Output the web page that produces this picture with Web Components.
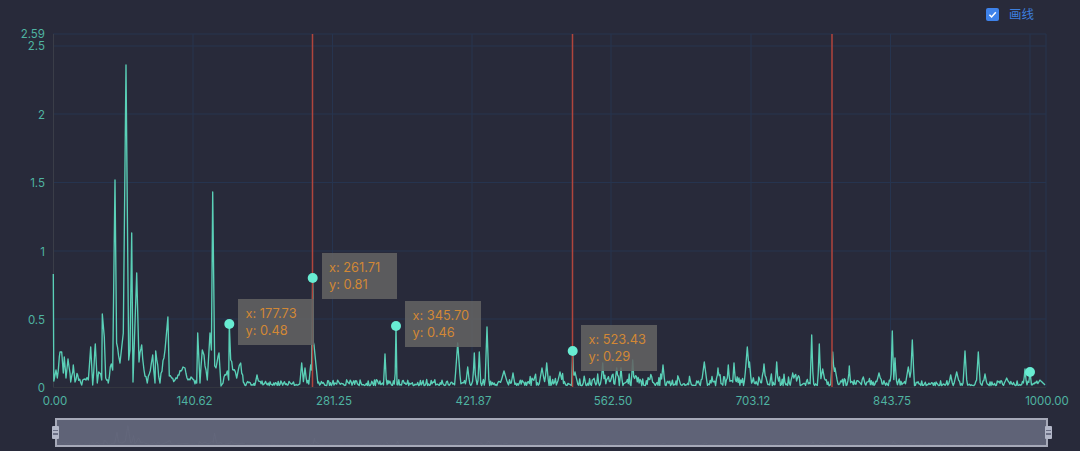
<!DOCTYPE html>
<html lang="zh">
<head>
<meta charset="utf-8">
<title>画线</title>
<style>
  html, body { margin: 0; background: #282a3a; }
  body { width: 1080px; height: 451px; overflow: hidden; font-family: Inter, "Noto Sans CJK SC", sans-serif; }
</style>
</head>
<body>
<chart-panel></chart-panel>
<script>
// hand read points for the busy left part, page pixels
const HEAD = [[53.3,274],[53.8,381],[56,370],[57.3,378],[60,352],[61.7,352],[63.3,373],[64.3,357],[66,378],[68,359],[70.7,382],[73.3,365],[75,382],[77.7,375],[81.7,385],[85,379],[88.3,380],[90.7,347],[92.7,385],[95.3,344],[97.3,383],[98.7,372],[101.7,380],[102.3,314],[104.3,337],[105.7,378],[108.3,383],[111.3,364],[112.7,370],[115,180],[116.6,343],[120,363],[123.3,333],[126,65],[128.7,360],[130,350],[131.7,233],[133,382],[136.7,273],[139,362],[141.7,345],[144,370],[147.3,383],[152.7,355],[155,383],[155.7,351],[160,383],[165,350],[167.9,317],[169.3,376],[171.7,378],[175,380],[178,375],[183,367],[185,368],[188,380],[192,378],[196.7,383],[197.7,333],[200,383],[202.3,350],[204,355],[207.3,380],[210,333],[211.4,350],[212.7,192],[214.7,366],[216,368],[219,353],[221,386],[224,377],[227.3,371],[228.7,380],[229.3,324],[230.7,360],[233.3,370],[236.7,378],[238.3,370],[240.7,363],[243.3,382]];

// [x, top y, half width]
const PEAKS = [[257,375,2],[301.7,363,2],[305,368,2],[310.7,365,2],[312.7,278,1],[314,345,4],[385,354,1.5],[396,326,1],[457.7,343,3],[467.7,367,2],[474.3,353,1.5],[479.3,352,1.5],[487,327,2],[504,371,4],[513,373,2],[542,368,3],[546.7,363,2],[560,372,3],[572.7,351,1],[575,372,3],[602.7,363,1.5],[616.7,368,2],[621,368,1.5],[632.7,360,1.5],[663,365,2],[704.3,362,3],[718,368,1.5],[728.3,365,1.5],[734,363,1.5],[747.3,347,3],[749.5,362,2],[764,364,2],[776.7,362,1.5],[792.7,373,2],[811.7,335,1.5],[819.3,344,1.5],[822.7,369,3],[832.7,352,2],[835,368,3],[849.3,366,1.2],[863.3,377,2],[879,373,3],[892.3,331,1.5],[895,358,1.5],[908.3,367,3],[912.3,340,2],[950.7,375,2],[956.7,372,3],[965,351,2],[978.3,352,2],[985,374,2],[1006.7,378,3],[1025,369,1.5],[1030,372,1.5],[1040,380,3]];

function noiseAt(i) {
  const s = Math.sin(i * 12.9898 + 4.1) * 43758.5453;
  return s - Math.floor(s);
}

function ampAt(x) {
  if (x < 300) return 5;
  if (x < 530) return 6;
  if (x < 800) return 12;
  if (x < 915) return 7;
  return 5;
}

// wiggle the long low stretches of the hand read part
function denseHead() {
  const out = [];
  HEAD.forEach((p, i) => {
    out.push(p);
    const q = HEAD[i + 1];
    if (!q || q[0] - p[0] < 2.2 || p[1] < 340 || q[1] < 340) return;
    for (let x = p[0] + 1; x < q[0] - .5; x += 1) {
      const t = (x - p[0]) / (q[0] - p[0]);
      const y = p[1] + (q[1] - p[1]) * t + (noiseAt(Math.round(x * 7)) - .5) * 7;
      out.push([x, Math.min(y, 386)]);
    }
  });
  return out;
}

function buildSeries() {
  const pts = denseHead();
  const xs = [];
  for (let x = 244; x <= 1045; x += .9) xs.push(x);
  PEAKS.forEach(p => xs.push(p[0]));
  xs.sort((a, b) => a - b);
  xs.forEach(x => {
    const n = noiseAt(Math.round(x * 3));
    let y = x > 1041 ? 381 + (x - 1041) : 385.5 - n * n * ampAt(x);
    PEAKS.forEach(([px, py, w]) => {
      const d = Math.abs(x - px);
      if (d < w) y = Math.min(y, py + (385 - py) * d / w);
    });
    pts.push([x, y]);
  });
  return pts;
}

const SERIES = buildSeries();
const toPath = (pts, fx, fy) => pts.map(p => fx(p[0]).toFixed(1) + "," + fy(p[1]).toFixed(1)).join(" ");

customElements.define("chart-legend", class extends HTMLElement {
  constructor() {
    super();
    this.attachShadow({mode: "open"});
    this.shadowRoot.innerHTML = `
    <style>
      :host { display: flex; justify-content: flex-end; align-items: center; height: 28px; padding-right: 46px; }
      .box { width: 13px; height: 13px; border-radius: 2px; background: #3e82ea; margin-right: 10px; display: flex; }
      .label { font: 12.5px/28px "Noto Sans CJK SC", sans-serif; color: #3d7fdc; }
    </style>
    <span class="box">
      <svg width="13" height="13" viewBox="0 0 13 13"><path d="M3.4 6.8 5.6 9 9.8 4.3" fill="none" stroke="#fff" stroke-width="1.5"/></svg>
    </span>
    <span class="label"><slot></slot></span>`;
  }
});

customElements.define("data-tip", class extends HTMLElement {
  constructor() {
    super();
    this.attachShadow({mode: "open"});
    this.shadowRoot.innerHTML = `
    <style>
      :host { position: absolute; box-sizing: border-box; width: 75.5px; height: 45.5px; padding: 6px 7.5px; background: rgba(99,99,99,.87);
        color: #d28835; font: 12.8px/17px Inter, sans-serif; white-space: nowrap; }
      div { display: block; }
    </style>
    <div id="x"></div><div id="y"></div>`;
  }

  connectedCallback() {
    this.style.left = this.getAttribute("left") + "px";
    this.style.top = this.getAttribute("top") + "px";
    this.shadowRoot.getElementById("x").textContent = "x: " + this.getAttribute("x");
    this.shadowRoot.getElementById("y").textContent = "y: " + this.getAttribute("y");
  }
});

customElements.define("line-chart", class extends HTMLElement {
  constructor() {
    super();
    this.attachShadow({mode: "open"});
    const hLines = [34, 46, 114, 182.5, 251, 319];
    const vLines = [193, 332.5, 472, 611, 751, 890.5, 1030, 1046];
    const yLabels = [["2.59", 38], ["2.5", 50], ["2", 118.5], ["1.5", 187], ["1", 255.5], ["0.5", 323.5], ["0", 392]];
    const xLabels = [["0.00", 55], ["140.62", 194.5], ["281.25", 334], ["421.87", 473.5], ["562.50", 613], ["703.12", 753], ["843.75", 892], ["1000.00", 1047]];
    const marks = [[229.3, 324], [312.7, 278], [396, 326], [572.7, 351], [1030, 372]];
    this.shadowRoot.innerHTML = `
    <style>
      :host { display: block; position: relative; height: 382px; }
      svg { display: block; }
      text { font: 11.5px Inter, sans-serif; fill: #4fb3a1; }
      .soft { filter: blur(.35px); }
    </style>
    <svg width="1080" height="382" viewBox="0 28 1080 382">
      ${hLines.map(y => `<line x1="53" x2="1046" y1="${y}" y2="${y}" stroke="#26344f"/>`).join("")}
      ${vLines.map(x => `<line x1="${x}" x2="${x}" y1="34" y2="387" stroke="#26344f"/>`).join("")}
      <line x1="53.5" x2="53.5" y1="34" y2="387" stroke="#3a3d48"/>
      <line x1="53" x2="1046" y1="387.5" y2="387.5" stroke="#33363f"/>
      ${yLabels.map(l => `<text x="45" y="${l[1]}" text-anchor="end">${l[0]}</text>`).join("")}
      ${xLabels.map(l => `<text x="${l[1]}" y="405" text-anchor="middle">${l[0]}</text>`).join("")}
      <polyline class="soft" points="${toPath(SERIES, x => x, y => y)}" fill="none" stroke="#5ad0b7" stroke-width="1.35" stroke-linejoin="round"/>
      ${[312.5, 572.5, 832].map(x => `<line class="soft" x1="${x}" x2="${x}" y1="34" y2="387" stroke="#b0453c" stroke-width="1.5"/>`).join("")}
      ${marks.map(m => `<circle class="soft" cx="${m[0]}" cy="${m[1]}" r="5" fill="#68ecd2"/>`).join("")}
    </svg>
    <slot></slot>`;
  }
});

customElements.define("zoom-bar", class extends HTMLElement {
  constructor() {
    super();
    this.attachShadow({mode: "open"});
    this.shadowRoot.innerHTML = `
    <style>
      :host { display: block; position: relative; box-sizing: border-box; width: 993px; height: 28.5px; margin: 8px 0 0 55px;
        background: #5f6377; border: 2px solid #a6a9b8; }
      svg { display: block; width: 100%; height: 100%; }
      .handle { position: absolute; top: 5.5px; width: 7px; height: 13px; border-radius: 1px; background: #b3b7c8; display: flex; flex-direction: column; justify-content: center; gap: 2px; align-items: center; }
      .handle i { display: block; width: 5px; height: 1.5px; background: #6c7086; }
      .l { left: -5.5px; } .r { right: -5.5px; }
    </style>
    <svg viewBox="0 0 990 25" preserveAspectRatio="none">
      <polyline points="${toPath(SERIES, x => x - 55, y => 25 - (387 - y) * .06)}" fill="none" stroke="#64687c" stroke-width=".8"/>
    </svg>
    <span class="handle l"><i></i><i></i></span>
    <span class="handle r"><i></i><i></i></span>`;
  }
});

customElements.define("chart-panel", class extends HTMLElement {
  constructor() {
    super();
    this.attachShadow({mode: "open"});
    this.shadowRoot.innerHTML = `
    <style>
      :host { display: block; width: 1080px; height: 451px; background: #282a3a; }
    </style>
    <chart-legend>画线</chart-legend>
    <line-chart>
      <data-tip left="238" top="271" x="177.73" y="0.48"></data-tip>
      <data-tip left="321.5" top="225" x="261.71" y="0.81"></data-tip>
      <data-tip left="405" top="273" x="345.70" y="0.46"></data-tip>
      <data-tip left="581" top="297" x="523.43" y="0.29"></data-tip>
    </line-chart>
    <zoom-bar></zoom-bar>`;
  }
});
</script>
</body>
</html>
